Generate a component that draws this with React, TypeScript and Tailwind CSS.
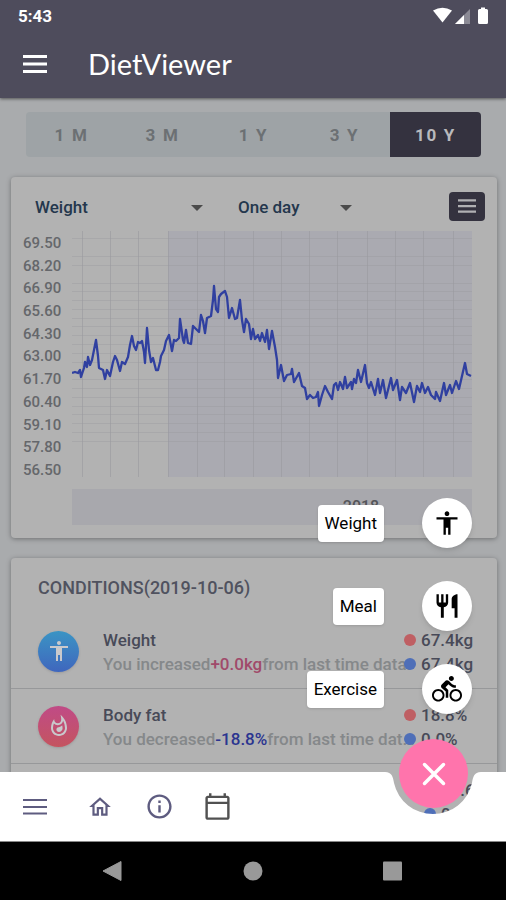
import React, { useState } from 'react';
import {
  MdAccessibility,
  MdDirectionsBike,
  MdOutlineCalendarToday,
  MdOutlineHome,
  MdOutlineInfo,
  MdOutlineWhatshot,
  MdRestaurant,
} from 'react-icons/md';

const RANGES = ['1 M', '3 M', '1 Y', '3 Y', '10 Y'];

const Y_LABELS = ['69.50', '68.20', '66.90', '65.60', '64.30', '63.00', '61.70', '60.40', '59.10', '57.80', '56.50'];

const V_LINES = [82, 110, 138, 168, 197, 224, 253, 281, 309, 337, 367, 395, 423, 453];
const H_LINES = [238, 256, 265, 283, 291, 300, 309, 318, 326, 335, 344, 353, 362, 379, 388, 397, 406, 414, 423, 432, 441];

const WEIGHT_LINE =
  '72,373 75,372 78,373 80,370 81,377 84,368 85,362 87,367 88,357 90,365 92,360 94,350 96,340 98,356 99,368 103,370 105,379 107,370 110,376 113,362 115,356 117,360 120,371 122,362 125,364 128,357 130,345 132,336 134,346 136,350 138,342 140,343 142,341 144,352 145,363 147,328 149,350 151,362 153,358 156,370 158,370 160,362 ' +
  '161,356 164,350 166,341 169,335 172,351 174,340 176,341 179,338 180,319 183,340 184,343 186,330 188,343 191,344 193,326 197,330 199,332 201,315 203,321 205,333 207,318 211,316 213,300 214,286 216,309 218,312 219,297 221,294 225,291 227,297 229,318 232,308 235,319 237,318 240,300 242,320 244,332 246,319 249,324 251,339 253,329 255,339 258,335 260,341 262,333 265,342 267,330 269,349 272,331 275,347 277,360 278,378 ' +
  '281,365 284,381 287,375 291,374 292,369 294,382 299,373 302,386 305,388 307,399 310,395 313,398 316,397 318,392 319,406 322,395 325,386 328,392 332,399 334,385 336,383 338,390 340,382 343,389 345,377 347,388 351,382 352,389 354,379 356,383 358,370 361,382 365,365 367,383 369,388 371,382 375,395 378,379 380,393 383,380 386,398 391,378 393,390 397,380 ' +
  '400,400 402,387 406,393 410,383 414,402 417,386 420,392 422,383 425,393 428,387 431,395 435,399 436,392 440,401 444,383 446,395 450,385 452,393 456,381 459,389 465,363 467,374 471,376';

const SPEED_DIAL = [
  { label: 'Weight', icon: <MdAccessibility size={28} /> },
  { label: 'Meal', icon: <MdRestaurant size={28} /> },
  { label: 'Exercise', icon: <MdDirectionsBike size={30} /> },
];

const CONDITIONS = [
  {
    name: 'Weight',
    verb: 'You increased',
    diff: '+0.0kg',
    diffColor: 'text-[#a04a6a]',
    badge: 'bg-gradient-to-b from-[#3a94c4] to-[#3f66bd]',
    icon: <MdAccessibility size={24} />,
    values: ['67.4kg', '67.4kg'],
    valuesWidth: 'w-[78px]',
  },
  {
    name: 'Body fat',
    verb: 'You decreased',
    diff: '-18.8%',
    diffColor: 'text-[#2b3590]',
    badge: 'bg-gradient-to-b from-[#c04a86] to-[#c4545f]',
    icon: <MdOutlineWhatshot size={24} />,
    values: ['18.8%', '0.0%'],
    valuesWidth: 'w-[78px]',
  },
  {
    name: 'BMI',
    verb: 'You decreased',
    diff: '-27.6',
    diffColor: 'text-[#2b3590]',
    badge: 'bg-gradient-to-b from-[#3a94c4] to-[#3f66bd]',
    icon: <MdAccessibility size={24} />,
    values: ['27.6', '0.0'],
    valuesWidth: 'w-[58px]',
  },
];

const MenuIcon = ({ className }: { className: string }) => (
  <svg viewBox="0 0 24 18" className={className} stroke="currentColor" strokeWidth="3">
    <path d="M0 1.500h24M0 9h24M0 16.500h24" />
  </svg>
);

const StatusBar = () => (
  <div className="flex h-8 items-center justify-between pl-[18px] pr-4">
    <span className="text-[17px] leading-5 font-bold">5:43</span>
    <svg viewBox="0 0 58 20" className="h-5 w-[58px]" fill="white">
      <path d="M1 4.500Q10.500-1 20 4.500L10.500 16.500Z" />
      <path d="M38 3V18H23Z" opacity="0.35" />
      <path d="M32 9V18H23Z" />
      <path d="M46 4.500q0-1.500 1.500-1.500H49V1.500h4V3h1.500Q56 3 56 4.500v12q0 1.500-1.500 1.500h-7Q46 18 46 16.500Z" />
    </svg>
  </div>
);

const WeightChart = () => (
  <div className="flex pr-[25px] pl-3">
    <ul className="flex h-[249px] w-[49px] shrink-0 flex-col justify-between pt-0.5 text-[15px] leading-5 font-medium text-[#65676b]">
      {Y_LABELS.map((label) => (
        <li key={label}>{label}</li>
      ))}
    </ul>
    <div className="min-w-0 flex-1">
      <svg viewBox="72 231 400 246" preserveAspectRatio="none" className="block h-[246px] w-full">
        <rect x="168" y="231" width="304" height="246" fill="#aaaab1" />
        <g stroke="#9a9a9f" strokeWidth="1" opacity="0.6">
          {V_LINES.map((x) => (
            <line key={x} x1={x + 0.5} x2={x + 0.5} y1="231" y2="477" />
          ))}
        </g>
        <g stroke="#9a9a9f" strokeWidth="1" opacity="0.4">
          {H_LINES.map((y) => (
            <line key={y} x1="72" x2="472" y1={y + 0.5} y2={y + 0.5} />
          ))}
        </g>
        <polyline points={WEIGHT_LINE} fill="none" stroke="#3040a0" strokeWidth="2.3" strokeLinejoin="round" />
      </svg>
      <div className="mt-3 flex h-9 items-center justify-center bg-[#a8a8ad] pl-[178px] text-base font-medium text-[#55565a]">
        2018
      </div>
    </div>
  </div>
);

const ConditionRow = ({ item }: { item: (typeof CONDITIONS)[number] }) => (
  <li className="flex h-[75px] items-center border-b border-[#97989a] pr-[15px] pl-[27px]">
    <div className={`flex size-[41px] shrink-0 items-center justify-center rounded-full text-[#c9c9cc] shadow-sm ${item.badge}`}>
      {item.icon}
    </div>
    <div className="ml-6 min-w-0 flex-1 pt-0.5 text-[17px] leading-6 font-medium">
      <p className="text-[#484a58]">{item.name}</p>
      <p className="truncate text-[#85888a]">
        {item.verb}
        <span className={item.diffColor}>{item.diff}</span>
        from last time data.
      </p>
    </div>
    <div className={`relative -ml-3 shrink-0 pt-0.5 text-[17px] leading-6 font-medium text-[#484a58] ${item.valuesWidth}`}>
      <p className="flex items-center gap-[5px]">
        <span className="size-3 rounded-full bg-[#bf5f63]"></span>
        {item.values[0]}
      </p>
      <p className="flex items-center gap-[5px]">
        <span className="size-3 rounded-full bg-[#4f6fb8]"></span>
        {item.values[1]}
      </p>
    </div>
  </li>
);

const BottomBar = () => (
  <nav className="relative -mt-[69px] flex h-[69px] shrink-0 text-[#5e5c80]">
    <div className="flex min-w-0 flex-1 items-center bg-white pl-[23px]">
      <button type="button" aria-label="Menu" className="w-16">
        <svg viewBox="0 0 24 18" className="h-[18px] w-6" stroke="currentColor" strokeWidth="2">
          <path d="M0 2h24M0 9h24M0 15.500h24" />
        </svg>
      </button>
      <button type="button" aria-label="Home" className="w-[58px]">
        <MdOutlineHome size={26} />
      </button>
      <button type="button" aria-label="Info" className="w-[58px]">
        <MdOutlineInfo size={29} />
      </button>
      <button type="button" aria-label="Calendar" className="text-[#515151]">
        <MdOutlineCalendarToday size={29} />
      </button>
    </div>
    {/* Curved cut-out around the action button */}
    <svg viewBox="0 0 96 69" className="h-[69px] w-24 shrink-0" fill="white">
      <path d="M0 0C7 0 8 5 9 11A40 40 0 0 0 87 11C88 5 89 0 96 0V69H0Z" />
    </svg>
    <div className="w-[25px] shrink-0 bg-white"></div>
  </nav>
);

const App: React.FC = () => {
  const [range, setRange] = useState('10 Y');
  const [dialOpen, setDialOpen] = useState(true);

  return (
    <div className="relative flex h-screen flex-col overflow-hidden bg-[#a9abad] font-[Roboto,sans-serif]">
      <header className="relative h-[98px] shrink-0 bg-[#4e4c5c] text-white shadow-[0_1px_3px_rgba(0,0,0,0.5)]">
        <StatusBar />
        <div className="flex h-16 items-center pl-[23px]">
          <button type="button" aria-label="Open menu">
            <MenuIcon className="h-[18px] w-6" />
          </button>
          <h1 className="ml-[41px] font-[Lato,sans-serif] text-[29px] leading-8">DietViewer</h1>
        </div>
      </header>

      <main className="min-h-0 flex-1 overflow-hidden pt-[14px] pr-[9px] pl-[11px]">
        <div className="mr-4 ml-[15px] flex h-[45px] overflow-hidden rounded bg-[#9ea3a6]">
          {RANGES.map((r) => (
            <button
              key={r}
              type="button"
              onClick={() => setRange(r)}
              className={`flex-1 pt-0.5 text-[17px] font-bold tracking-widest ${range === r ? 'bg-[#34323f] text-[#b9b9bc]' : 'text-[#6c7073]'}`}
            >
              {r}
            </button>
          ))}
        </div>

        <section className="mt-5 h-[361px] rounded bg-[#b2b2b2] shadow-[0_1px_5px_rgba(0,0,0,0.35)]">
          <div className="flex h-[54px] items-center pt-2 pr-3 pl-6">
            <div className="relative w-[168px]">
              <select aria-label="Measure" className="w-full appearance-none bg-transparent text-[17px] font-medium text-[#24374d]">
                <option>Weight</option>
                <option>Body fat</option>
              </select>
              <span className="pointer-events-none absolute top-1/2 right-0 -mt-[3px] border-x-6 border-t-6 border-x-transparent border-t-[#4b4b4b]"></span>
            </div>
            <div className="relative ml-[35px] w-[114px]">
              <select aria-label="Interval" className="w-full appearance-none bg-transparent text-[17px] font-medium text-[#24374d]">
                <option>One day</option>
                <option>One week</option>
              </select>
              <span className="pointer-events-none absolute top-1/2 right-0 -mt-[3px] border-x-6 border-t-6 border-x-transparent border-t-[#4b4b4b]"></span>
            </div>
            <button
              type="button"
              aria-label="Chart options"
              className="mb-1 ml-auto flex h-[29px] w-9 items-center justify-center rounded bg-[#34323f] text-[#b0b0b3]"
            >
              <MenuIcon className="h-[14px] w-[18px]" />
            </button>
          </div>
          <WeightChart />
        </section>

        <section className="mt-5 rounded bg-[#b2b2b2] shadow-[0_1px_5px_rgba(0,0,0,0.35)]">
          <h2 className="h-14 pt-[18px] pl-[27px] text-lg leading-6 font-medium text-[#50525f]">CONDITIONS(2019-10-06)</h2>
          <ul>
            {CONDITIONS.map((item) => (
              <ConditionRow key={item.name} item={item} />
            ))}
          </ul>
        </section>
      </main>

      <BottomBar />

      <div className="flex h-[59px] shrink-0 items-center justify-center border-t border-[#888888] bg-black">
        <svg viewBox="0 0 304 24" className="h-6 w-[304px]" fill="#999999">
          <path d="M20 2.500V21.500L2 12Z" stroke="#999999" strokeLinejoin="round" />
          <circle cx="152" cy="12" r="9.500" />
          <rect x="282" y="2.500" width="19" height="19" rx="1" />
        </svg>
      </div>

      {/* Floating action button with its menu */}
      {dialOpen && (
        <ul className="absolute right-[34px] bottom-[186px] flex flex-col gap-[33px]">
          {SPEED_DIAL.map(({ label, icon }) => (
            <li key={label} className="flex items-center justify-end gap-[38px]">
              <label htmlFor={label} className="rounded bg-white px-[7px] text-[17px] leading-[37px] text-black shadow">
                {label}
              </label>
              <button
                id={label}
                type="button"
                className="flex size-[50px] items-center justify-center rounded-full bg-white text-black shadow-md"
              >
                {icon}
              </button>
            </li>
          ))}
        </ul>
      )}
      <button
        type="button"
        aria-label={dialOpen ? 'Close' : 'Add'}
        onClick={() => setDialOpen(!dialOpen)}
        className="absolute right-[38px] bottom-[92px] flex size-[69px] items-center justify-center rounded-full bg-[#ff74ac] text-white"
      >
        <svg viewBox="0 0 24 24" className="size-6" stroke="currentColor" strokeWidth="3.500" strokeLinecap="round">
          <path d="M2.500 2.500L21.500 21.500M21.500 2.500L2.500 21.500" />
        </svg>
      </button>
    </div>
  );
};

export default App;
